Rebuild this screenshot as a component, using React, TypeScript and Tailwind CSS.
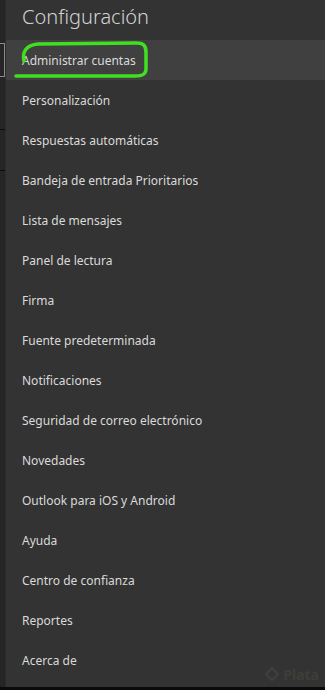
import React from 'react'

const items = [
  'Administrar cuentas',
  'Personalización',
  'Respuestas automáticas',
  'Bandeja de entrada Prioritarios',
  'Lista de mensajes',
  'Panel de lectura',
  'Firma',
  'Fuente predeterminada',
  'Notificaciones',
  'Seguridad de correo electrónico',
  'Novedades',
  'Outlook para iOS y Android',
  'Ayuda',
  'Centro de confianza',
  'Reportes',
  'Acerca de',
]

const App = () => {
  return (
    <div
      className="flex h-[690px] w-[325px] flex-col overflow-hidden bg-[#333333]"
      style={{ fontFamily: '"Noto Sans", "Open Sans", sans-serif' }}
    >
      <div className="flex flex-1">
        {/* strip of the window behind */}
        <div className="flex w-[6px] flex-col border-r border-[#2b2b2b] bg-[#252525]">
          <div className="h-[43px]" />
          <div className="h-[34px] border-y border-r border-[#8a8a8a]" />
          <div className="h-[52px]" />
          <div className="h-[41px] border-t border-[#0c0c0c]" />
          <div className="border-t border-[#0c0c0c]" />
        </div>

        <div className="relative flex flex-1 flex-col">
          <div className="flex h-[40px] items-center pl-[16px] pb-[6px] text-[20px] font-light text-[#d2d2d2]">
            Configuración
          </div>
          {items.map((item, index) => (
            <div
              key={item}
              className={`flex h-[40px] items-center pl-[16px] pt-[2px] text-[12px] text-[#dadada] ${
                index === 0 ? 'bg-[#404040]' : ''
              }`}
            >
              {item}
            </div>
          ))}

          {/* hand-drawn green mark */}
          <svg
            className="pointer-events-none absolute left-[8px] top-[40px]"
            width="136"
            height="40"
            viewBox="0 0 136 40"
            fill="none"
          >
            <path
              d="M10 21 C 8 12, 12 5, 24 4 L 122 3 C 129 3, 132 5, 132 12 L 132 29 C 132 34, 129 36, 121 36 L 2 36"
              stroke="#3fe01f"
              strokeWidth="3.5"
              strokeLinecap="round"
              strokeLinejoin="round"
            />
          </svg>

          {/* faint watermark */}
          <div className="pointer-events-none absolute bottom-[2px] right-[6px] flex items-center gap-[2px] opacity-[0.06]">
            <svg width="18" height="18" viewBox="0 0 18 18" fill="none">
              <path
                d="M9 2 L15 8 L9 14 L3 8 Z"
                stroke="#c8f0a0"
                strokeWidth="2.5"
                strokeLinejoin="round"
              />
            </svg>
            <span className="text-[14px] font-bold text-[#c8f0a0]">Plata</span>
          </div>
        </div>
      </div>
      <div className="h-[3px] bg-[#0a0a0a]" />
    </div>
  )
}

export default App
